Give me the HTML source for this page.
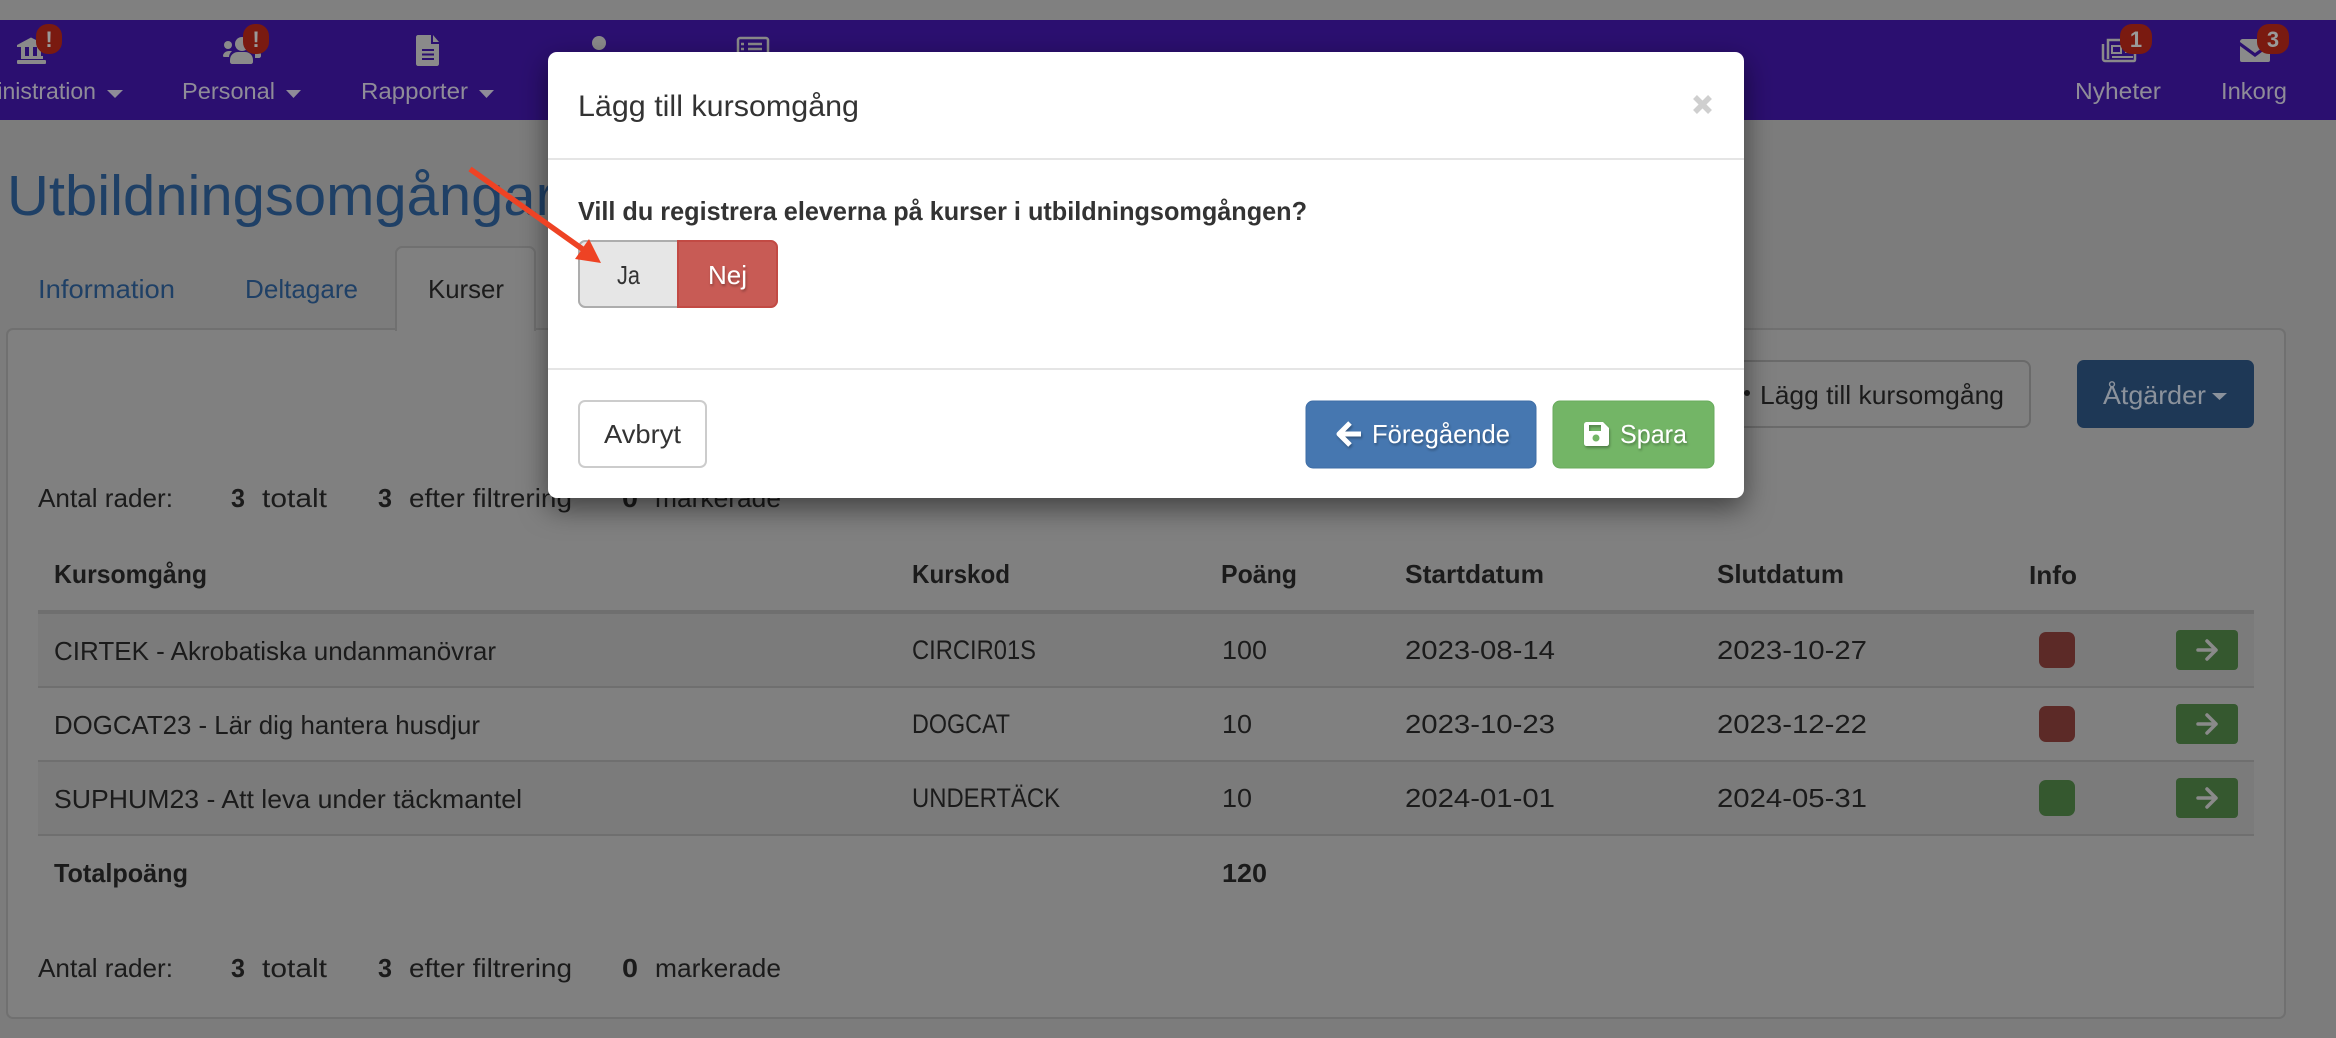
<!DOCTYPE html>
<html lang="sv">
<head>
<meta charset="utf-8">
<title>Utbildningsomgångar</title>
<style>
html,body{margin:0;padding:0;width:2336px;height:1038px;overflow:hidden;background:#7c7c7c}
svg{display:block}
text{font-family:"Liberation Sans",Arial,sans-serif;font-size:26px;fill:#1b1b1b}
.b{font-weight:700}
.nav{font-size:23px;fill:#8f8c98}
.badge{font-size:22px;font-weight:700;fill:#9a9a9a}
.link{fill:#1f4066}
.m{fill:#333}
.w{fill:#fff}
</style>
</head>
<body>
<svg xmlns="http://www.w3.org/2000/svg" width="2336" height="1038" viewBox="0 0 2336 1038">
<defs>
<filter id="ms" x="-10%" y="-20%" width="120%" height="150%"><feDropShadow dx="0" dy="10" stdDeviation="14" flood-color="#000" flood-opacity=".5"/></filter>
<filter id="ts" x="-20%" y="-30%" width="140%" height="170%"><feDropShadow dx="1" dy="2" stdDeviation="1.4" flood-color="#000" flood-opacity=".3"/></filter>
</defs>

<!-- page background -->
<rect width="2336" height="20" fill="#808080"/>
<rect y="120" width="2336" height="918" fill="#7c7c7c"/>

<!-- nav -->
<rect y="20" width="2336" height="100" fill="#2b0f70"/>
<text class="nav" x="-50" y="99" textLength="146" lengthAdjust="spacingAndGlyphs">Administration</text>
<path d="M107 90h16l-8 8z" fill="#8f8c98"/>
<text class="nav" x="182" y="99" textLength="93" lengthAdjust="spacingAndGlyphs">Personal</text>
<path d="M286 90h15l-7.500 8z" fill="#8f8c98"/>
<text class="nav" x="361" y="99" textLength="107" lengthAdjust="spacingAndGlyphs">Rapporter</text>
<path d="M479 90h15l-7.500 8z" fill="#8f8c98"/>
<text class="nav" x="2075" y="99" textLength="86" lengthAdjust="spacingAndGlyphs">Nyheter</text>
<text class="nav" x="2221" y="99" textLength="66" lengthAdjust="spacingAndGlyphs">Inkorg</text>

<!-- bank icon -->
<g fill="#8a8a8a">
<path d="M17 45L31 37.500 46 45v2H17z"/>
<rect x="21" y="56" width="22" height="3"/>
<rect x="21" y="47" width="4" height="10"/><rect x="29" y="47" width="4" height="10"/><rect x="37" y="47" width="4" height="10"/>
<rect x="17" y="60" width="29" height="4" rx="1"/>
</g>
<!-- people icon -->
<g fill="#8a8a8a">
<circle cx="228" cy="45" r="4"/>
<path d="M223 56c0-3 3-5 6-5h3c-2 2-3 4-3 6h-4c-1 0-2 0-2-1z"/>
<circle cx="242" cy="44" r="7"/>
<path d="M230 60c0-5 4-8 8-8h7c4 0 8 3 8 8v2c0 1-1 2-2 2h-19c-1 0-2-1-2-2z"/>
<path d="M255 52h4c1 0 2 1 2 3v1c0 1-1 2-2 2h-4z"/>
</g>
<!-- file icon -->
<path fill-rule="evenodd" fill="#8a8a8a" d="M416 37c0-1 1-2 2-2h13v9h8v20c0 1-1 2-2 2h-19c-1 0-2-1-2-2zM433 35l6 7h-6zM422 49v2h12v-2zM422 53.500v2h12v-2zM422 58v2h12v-2z"/>
<!-- clipped icons behind the modal -->
<circle cx="599" cy="43" r="7" fill="#8a8a8a"/>
<path fill="none" stroke="#8a8a8a" stroke-width="2.500" d="M738 56V40c0-1 1-2 2-2h26c1 0 2 1 2 2v16"/>
<path stroke="#8a8a8a" stroke-width="2.500" d="M748 44h14M748 49h14M741 44h3M741 49h3"/>
<!-- newspaper icon -->
<g fill="none" stroke="#8a8a8a" stroke-width="2.500">
<path d="M2103 44v15c0 1 1 2 2 2h29c1 0 1-1 1-2V40h-27v19"/>
<path d="M2112 46h9v7h-9zM2112 57h21M2125 47h9M2125 52h9" stroke-width="2"/>
</g>
<!-- envelope icon -->
<path fill="#8a8a8a" d="M2240 42c0-2 1-3 3-3h24c2 0 3 1 3 3v0l-15 11zM2240 46l15 11 15-11v14c0 2-1 2-3 2h-24c-2 0-3 0-3-2z"/>
<!-- badges -->
<g fill="#7a1a10">
<rect x="36" y="24" width="26" height="30" rx="12"/>
<rect x="243" y="24" width="26" height="30" rx="12"/>
<rect x="2120" y="24" width="32" height="30" rx="12"/>
<rect x="2257" y="24" width="32" height="30" rx="12"/>
</g>
<text class="badge" x="49" y="47" text-anchor="middle">!</text>
<text class="badge" x="256" y="47" text-anchor="middle">!</text>
<text class="badge" x="2136" y="47" text-anchor="middle">1</text>
<text class="badge" x="2273" y="47" text-anchor="middle">3</text>

<!-- page title -->
<text class="link" x="7" y="215" style="font-size:57px" textLength="548" lengthAdjust="spacingAndGlyphs">Utbildningsomgångar</text>

<!-- panel & tabs -->
<rect x="7" y="329" width="2278" height="689" rx="6" fill="#808080" stroke="#707070" stroke-width="2"/>
<path d="M396 330V253c0-3 3-6 6-6h127c3 0 6 3 6 6v77z" fill="#808080" stroke="#707070" stroke-width="2"/>
<rect x="397" y="326" width="137" height="5" fill="#808080"/>
<text class="link" x="38" y="298" textLength="137" lengthAdjust="spacingAndGlyphs">Information</text>
<text class="link" x="245" y="298" textLength="113" lengthAdjust="spacingAndGlyphs">Deltagare</text>
<text x="428" y="298" textLength="76" lengthAdjust="spacingAndGlyphs">Kurser</text>

<!-- toolbar buttons -->
<rect x="1700" y="361" width="330" height="66" rx="7" fill="#808080" stroke="#6a6a6a" stroke-width="2"/>
<circle cx="1747" cy="393" r="3" fill="#1b1b1b"/>
<text x="1760" y="404" textLength="244" lengthAdjust="spacingAndGlyphs">Lägg till kursomgång</text>
<rect x="2077" y="360" width="177" height="68" rx="7" fill="#1e3856"/>
<text x="2103" y="404" textLength="103" lengthAdjust="spacingAndGlyphs" style="fill:#8b929c">Åtgärder</text>
<path d="M2212 393h15l-7.500 7z" fill="#8b929c"/>

<!-- counts top -->
<text x="38" y="507" textLength="135" lengthAdjust="spacingAndGlyphs">Antal rader:</text>
<text class="b" x="231" y="507" textLength="14" lengthAdjust="spacingAndGlyphs">3</text>
<text x="262" y="507" textLength="65" lengthAdjust="spacingAndGlyphs">totalt</text>
<text class="b" x="378" y="507" textLength="14" lengthAdjust="spacingAndGlyphs">3</text>
<text x="409" y="507" textLength="163" lengthAdjust="spacingAndGlyphs">efter filtrering</text>
<text class="b" x="622" y="507" textLength="16" lengthAdjust="spacingAndGlyphs">0</text>
<text x="655" y="507" textLength="126" lengthAdjust="spacingAndGlyphs">markerade</text>

<!-- table -->
<text class="b" x="54" y="583" textLength="153" lengthAdjust="spacingAndGlyphs">Kursomgång</text>
<text class="b" x="912" y="583" textLength="98" lengthAdjust="spacingAndGlyphs">Kurskod</text>
<text class="b" x="1221" y="583" textLength="76" lengthAdjust="spacingAndGlyphs">Poäng</text>
<text class="b" x="1405" y="583" textLength="139" lengthAdjust="spacingAndGlyphs">Startdatum</text>
<text class="b" x="1717" y="583" textLength="127" lengthAdjust="spacingAndGlyphs">Slutdatum</text>
<text class="b" x="2029" y="584" textLength="48" lengthAdjust="spacingAndGlyphs">Info</text>

<rect x="38" y="614" width="2216" height="72" fill="#7b7b7b"/>
<rect x="38" y="762" width="2216" height="72" fill="#7b7b7b"/>
<rect x="38" y="610" width="2216" height="4" fill="#6f6f6f"/>
<rect x="38" y="686" width="2216" height="2" fill="#6f6f6f"/>
<rect x="38" y="760" width="2216" height="2" fill="#6f6f6f"/>
<rect x="38" y="834" width="2216" height="2" fill="#6f6f6f"/>

<text x="54" y="660" textLength="442" lengthAdjust="spacingAndGlyphs">CIRTEK - Akrobatiska undanmanövrar</text>
<text x="912" y="659" style="font-size:27px" textLength="124" lengthAdjust="spacingAndGlyphs">CIRCIR01S</text>
<text x="1222" y="659" textLength="45" lengthAdjust="spacingAndGlyphs">100</text>
<text x="1405" y="659" textLength="150" lengthAdjust="spacingAndGlyphs">2023-08-14</text>
<text x="1717" y="659" textLength="150" lengthAdjust="spacingAndGlyphs">2023-10-27</text>

<text x="54" y="734" textLength="426" lengthAdjust="spacingAndGlyphs">DOGCAT23 - Lär dig hantera husdjur</text>
<text x="912" y="733" style="font-size:27px" textLength="98" lengthAdjust="spacingAndGlyphs">DOGCAT</text>
<text x="1222" y="733" textLength="30" lengthAdjust="spacingAndGlyphs">10</text>
<text x="1405" y="733" textLength="150" lengthAdjust="spacingAndGlyphs">2023-10-23</text>
<text x="1717" y="733" textLength="150" lengthAdjust="spacingAndGlyphs">2023-12-22</text>

<text x="54" y="808" textLength="468" lengthAdjust="spacingAndGlyphs">SUPHUM23 - Att leva under täckmantel</text>
<text x="912" y="807" style="font-size:27px" textLength="148" lengthAdjust="spacingAndGlyphs">UNDERTÄCK</text>
<text x="1222" y="807" textLength="30" lengthAdjust="spacingAndGlyphs">10</text>
<text x="1405" y="807" textLength="150" lengthAdjust="spacingAndGlyphs">2024-01-01</text>
<text x="1717" y="807" textLength="150" lengthAdjust="spacingAndGlyphs">2024-05-31</text>

<text class="b" x="54" y="882" textLength="134" lengthAdjust="spacingAndGlyphs">Totalpoäng</text>
<text class="b" x="1222" y="882" textLength="45" lengthAdjust="spacingAndGlyphs">120</text>

<!-- status squares -->
<rect x="2039" y="632" width="36" height="36" rx="7" fill="#5c2a27"/>
<rect x="2039" y="706" width="36" height="36" rx="7" fill="#5c2a27"/>
<rect x="2039" y="780" width="36" height="36" rx="7" fill="#35582f"/>
<!-- row buttons -->
<g fill="#35582f">
<rect x="2176" y="630" width="62" height="40" rx="4"/>
<rect x="2176" y="704" width="62" height="40" rx="4"/>
<rect x="2176" y="778" width="62" height="40" rx="4"/>
</g>
<g fill="none" stroke="#8a8a8a" stroke-width="3.500" stroke-linecap="round" stroke-linejoin="round">
<path d="M2198 650h18M2207 641l9 9-9 9"/>
<path d="M2198 724h18M2207 715l9 9-9 9"/>
<path d="M2198 798h18M2207 789l9 9-9 9"/>
</g>

<!-- counts bottom -->
<text x="38" y="977" textLength="135" lengthAdjust="spacingAndGlyphs">Antal rader:</text>
<text class="b" x="231" y="977" textLength="14" lengthAdjust="spacingAndGlyphs">3</text>
<text x="262" y="977" textLength="65" lengthAdjust="spacingAndGlyphs">totalt</text>
<text class="b" x="378" y="977" textLength="14" lengthAdjust="spacingAndGlyphs">3</text>
<text x="409" y="977" textLength="163" lengthAdjust="spacingAndGlyphs">efter filtrering</text>
<text class="b" x="622" y="977" textLength="16" lengthAdjust="spacingAndGlyphs">0</text>
<text x="655" y="977" textLength="126" lengthAdjust="spacingAndGlyphs">markerade</text>

<!-- modal -->
<rect x="548" y="52" width="1196" height="446" rx="9" fill="#fff" filter="url(#ms)"/>
<rect x="548" y="158" width="1196" height="2" fill="#e5e5e5"/>
<rect x="548" y="368" width="1196" height="2" fill="#e5e5e5"/>
<text class="m" x="578" y="116" style="font-size:30px" textLength="281" lengthAdjust="spacingAndGlyphs">Lägg till kursomgång</text>
<path d="M1695 97l15 15M1710 97l-15 15" stroke="#cfcfcf" stroke-width="5.500" fill="none"/>
<text class="m b" x="578" y="220" textLength="729" lengthAdjust="spacingAndGlyphs">Vill du registrera eleverna på kurser i utbildningsomgången?</text>

<!-- Ja / Nej -->
<path d="M678 241H585c-3 0-6 3-6 6v54c0 3 3 6 6 6h93z" fill="#e6e6e6" stroke="#adadad" stroke-width="2"/>
<path d="M678 241h93c3 0 6 3 6 6v54c0 3-3 6-6 6h-93z" fill="#c85b55" stroke="#c24a44" stroke-width="2"/>
<text class="m" x="617" y="284" textLength="23" lengthAdjust="spacingAndGlyphs">Ja</text>
<text class="w" x="708" y="284" textLength="39" lengthAdjust="spacingAndGlyphs" filter="url(#ts)">Nej</text>

<!-- footer buttons -->
<rect x="579" y="401" width="127" height="66" rx="6" fill="#fff" stroke="#ccc" stroke-width="2"/>
<text class="m" x="604" y="443" textLength="77" lengthAdjust="spacingAndGlyphs">Avbryt</text>

<rect x="1306" y="401" width="230" height="67" rx="7" fill="#4677b0" stroke="#3f6ea6" stroke-width="1"/>
<g filter="url(#ts)">
<path d="M1361 434h-21M1350 423l-11 11 11 11" fill="none" stroke="#fff" stroke-width="5" stroke-linejoin="round"/>
<text class="w" x="1372" y="443" textLength="138" lengthAdjust="spacingAndGlyphs">Föregående</text>
</g>

<rect x="1553" y="401" width="161" height="67" rx="7" fill="#73b566" stroke="#68ab5c" stroke-width="1"/>
<g filter="url(#ts)">
<path fill-rule="evenodd" fill="#fff" d="M1587 422h16l6 6v15c0 2-1 3-3 3h-19c-2 0-3-1-3-3v-18c0-2 1-3 3-3zM1589 425v6h12v-6z"/>
<circle cx="1596" cy="438" r="3.500" fill="#73b566"/>
<text class="w" x="1620" y="443" textLength="67" lengthAdjust="spacingAndGlyphs">Spara</text>
</g>

<!-- annotation arrow -->
<path d="M470 169L588 253" stroke="#ee4324" stroke-width="5.500" fill="none"/>
<path d="M601 263L589 239 575 259z" fill="#ee4324"/>
</svg>
</body>
</html>
